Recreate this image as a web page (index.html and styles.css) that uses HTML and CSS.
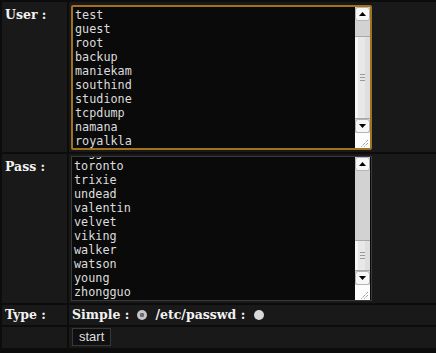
FILE: index.html
```html
<!DOCTYPE html>
<html>
<head>
<meta charset="utf-8">
<link rel="stylesheet" href="styles.css">
</head>
<body>
<table class="form">
  <tr>
    <td class="label">User :</td>
    <td class="field">
      <div class="ta-wrap wrap-user">
        <textarea class="ta ta-user" id="user" spellcheck="false">admin
user
test
guest
root
backup
maniekam
southind
studione
tcpdump
namana
royalkla</textarea>
        <div class="sb">
          <div class="sb-btn sb-up"><svg width="7" height="4" viewBox="0 0 7 4"><path d="M0 4h7L3.5 0z" fill="#000"/></svg></div>
          <div class="sb-track">
            <div class="sb-space space-user"></div>
            <div class="sb-thumb"><span></span><span></span><span></span></div>
          </div>
          <div class="sb-btn sb-down"><svg width="7" height="4" viewBox="0 0 7 4"><path d="M0 0h7L3.5 4z" fill="#000"/></svg></div>
        </div>
        <div class="grip"><svg width="15" height="15" viewBox="0 0 15 15"><path d="M6.5 13.5l7-7M9.5 13.5l4-4" stroke="#666" stroke-width="1" stroke-dasharray="1 1" fill="none"/></svg></div>
      </div>
    </td>
  </tr>
  <tr>
    <td class="label">Pass :</td>
    <td class="field">
      <div class="ta-wrap wrap-pass">
        <textarea class="ta ta-pass" id="pass" spellcheck="false">123456
abc123
admin
angel
batman
charlie
dragon
eagle
football
freedom
hunter
jordan
killer
letmein
master
monkey
password
qwerty
secret
shadow
summer
superman
tigger
toronto
trixie
undead
valentin
velvet
viking
walker
watson
young
zhongguo</textarea>
        <div class="sb">
          <div class="sb-btn sb-up"><svg width="7" height="4" viewBox="0 0 7 4"><path d="M0 4h7L3.5 0z" fill="#000"/></svg></div>
          <div class="sb-track">
            <div class="sb-space space-pass"></div>
            <div class="sb-thumb"><span></span><span></span><span></span></div>
          </div>
          <div class="sb-btn sb-down"><svg width="7" height="4" viewBox="0 0 7 4"><path d="M0 0h7L3.5 4z" fill="#000"/></svg></div>
        </div>
        <div class="grip"><svg width="15" height="15" viewBox="0 0 15 15"><path d="M6.5 13.5l7-7M9.5 13.5l4-4" stroke="#666" stroke-width="1" stroke-dasharray="1 1" fill="none"/></svg></div>
      </div>
    </td>
  </tr>
  <tr class="row-type">
    <td class="label label-mid">Type :</td>
    <td class="field type">
      <div class="type-row">
        <span class="opt">Simple :</span>
        <input class="radio radio-1" type="radio" name="type" checked>
        <span class="opt">/etc/passwd :</span>
        <input class="radio radio-2" type="radio" name="type">
      </div>
    </td>
  </tr>
  <tr class="row-btn">
    <td class="label"></td>
    <td class="field btn-cell"><button class="start" type="button">start</button></td>
  </tr>
</table>
<script src="script.js"></script>
</body>
</html>
```

FILE: styles.css
```css
html, body {
  margin: 0;
  padding: 0;
  background: #0c0c0c;
  overflow: hidden;
}

.form {
  border-collapse: separate;
  border-spacing: 2px;
  width: 470px;
}

.form td {
  background: #191919;
  box-sizing: border-box;
}

.label {
  width: 65px;
  padding: 6px 3px 2px 3px;
  vertical-align: top;
  font-family: "DejaVu Serif", serif;
  font-weight: bold;
  font-size: 12.5px;
  line-height: 14px;
  color: #f2f2f2;
}

.label-mid {
  vertical-align: middle;
  padding: 0 3px;
}

.field {
  padding: 2px;
  vertical-align: top;
}

.ta-wrap {
  position: relative;
  width: 301px;
}

.wrap-user {
  margin-top: 1px;
}

.ta {
  display: block;
  box-sizing: border-box;
  width: 301px;
  margin: 0;
  padding: 0 18px 0 2px;
  background: #0a0a0a;
  color: #dcdcdc;
  font-family: "DejaVu Sans Mono", monospace;
  font-size: 11.8px;
  line-height: 14px;
  outline: none;
  overflow: hidden;
  resize: none;
}

.ta-user {
  height: 145px;
  border: 2px solid #a2711f;
  border-radius: 2px;
}

.ta-pass {
  height: 145px;
  padding-top: 1px;
  padding-bottom: 1px;
  border: 1px solid #3a3a3a;
}

.sb {
  position: absolute;
  right: 2px;
  top: 2px;
  bottom: 17px;
  width: 15px;
  display: flex;
  flex-direction: column;
  background: #d2d2d2;
}

.wrap-pass .sb {
  right: 2px;
  top: 1px;
  bottom: 16px;
}

.sb-btn {
  flex: 0 0 14px;
  box-sizing: border-box;
  background: #f7f7f7;
  border: 1px solid #b4b4b4;
  border-radius: 3px;
  display: flex;
  align-items: center;
  justify-content: center;
}

.sb-btn svg {
  display: block;
}

.sb-track {
  flex: 1;
  display: flex;
  flex-direction: column;
}

.space-user {
  flex: 0 0 15px;
}

.space-pass {
  flex: 0 0 69px;
}

.sb-thumb {
  flex: 1;
  box-sizing: border-box;
  border-top: 1px solid #a8a8a8;
  border-bottom: 1px solid #a8a8a8;
  background: linear-gradient(to right, #f6f6f6 0 3px, #e8e8e8 3px 10px, #dedede 10px);
  display: flex;
  flex-direction: column;
  align-items: center;
  justify-content: center;
  gap: 2px;
}

.sb-thumb span {
  display: block;
  width: 5px;
  height: 1px;
  background: #9a9a9a;
}

.grip {
  position: absolute;
  right: 2px;
  bottom: 2px;
  width: 15px;
  height: 15px;
  background: #fcfcfc;
}

.wrap-pass .grip {
  right: 2px;
  bottom: 1px;
}

.grip svg {
  display: block;
}

.row-type td {
  height: 20px;
}

.type {
  vertical-align: middle;
  padding: 0 2px 0 3px;
}

.type-row {
  display: flex;
  align-items: center;
  height: 20px;
  font-family: "DejaVu Serif", serif;
  font-weight: bold;
  font-size: 12.5px;
  line-height: 20px;
  color: #f2f2f2;
  white-space: nowrap;
}

.radio {
  -webkit-appearance: none;
  appearance: none;
  flex: 0 0 10px;
  width: 10px;
  height: 10px;
  margin: 0;
  border-radius: 50%;
  background: #d8d8d8;
  box-sizing: border-box;
}

.radio-1 {
  margin: 0 8px 0 8px;
}

.radio-2 {
  margin-left: 9px;
}

.radio:checked {
  background: radial-gradient(circle, #6e6e6e 0 2px, #c4c4c4 2.5px);
}

.row-btn td {
  height: 21px;
}

.btn-cell {
  padding: 1px 2px 2px 3px;
}

.start {
  display: block;
  height: 18px;
  margin: 0;
  padding: 0 6px;
  background: #0f0f0f;
  border: 1px solid #383838;
  border-radius: 0;
  color: #dedede;
  font-family: "Liberation Sans", Arial, sans-serif;
  font-size: 13px;
  line-height: 16px;
}
```

FILE: script.js
```js
document.getElementById('pass').scrollTop = 100000;
document.getElementById('user').scrollTop = 100000;
```
